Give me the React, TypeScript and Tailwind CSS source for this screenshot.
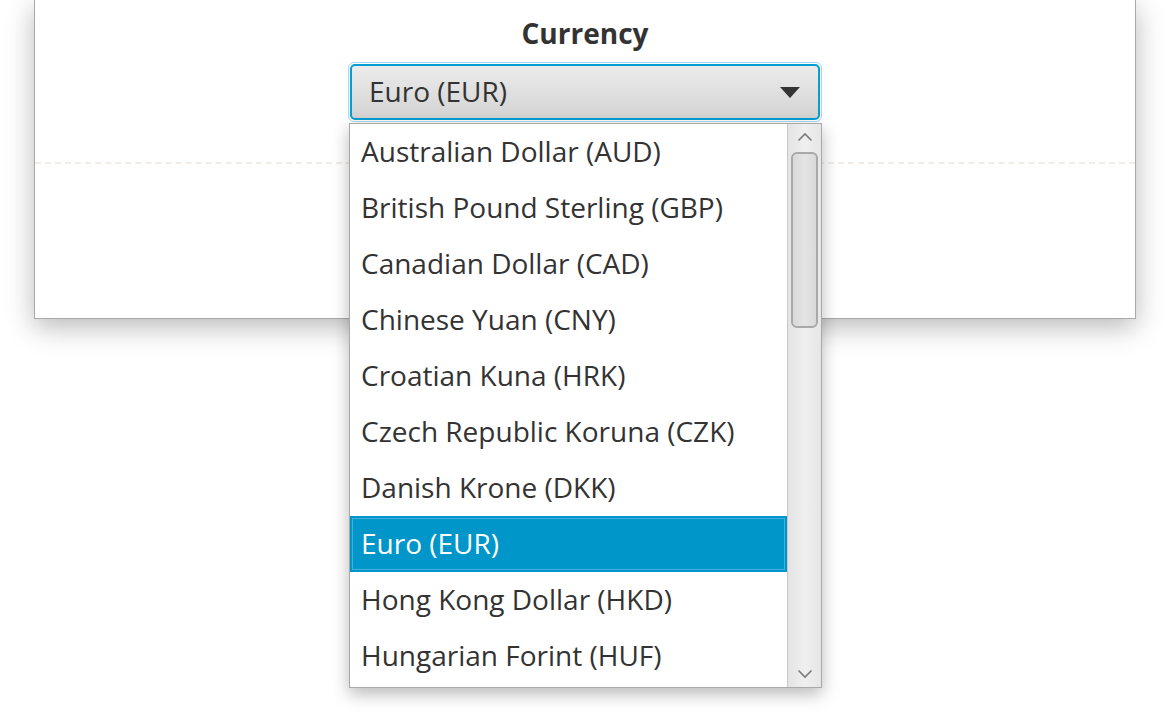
import React from 'react';

const currencies = [
    'Australian Dollar (AUD)',
    'British Pound Sterling (GBP)',
    'Canadian Dollar (CAD)',
    'Chinese Yuan (CNY)',
    'Croatian Kuna (HRK)',
    'Czech Republic Koruna (CZK)',
    'Danish Krone (DKK)',
    'Euro (EUR)',
    'Hong Kong Dollar (HKD)',
    'Hungarian Forint (HUF)',
];

const selected = 'Euro (EUR)';

const ScrollBar = () => (
    <div className="w-[34px] shrink-0 flex flex-col border-l border-[#c9c9c9] bg-gradient-to-r from-[#e4e4e4] via-[#efefef] to-[#e6e6e6]">
        <div className="h-[26px] flex items-center justify-center">
            <svg width="16" height="10" viewBox="0 0 16 10">
                <path d="M1.5 8.5 L8 2 L14.5 8.5" fill="none" stroke="#7a7a7a" strokeWidth="1.6" />
            </svg>
        </div>
        <div className="px-[3px] pt-[2px]">
            <div className="h-[176px] rounded-[6px] border-2 border-[#a9a9a9] bg-gradient-to-r from-[#d9d9d9] via-[#e4e4e4] to-[#dadada]" />
        </div>
        <div className="flex-1" />
        <div className="h-[26px] flex items-center justify-center">
            <svg width="16" height="10" viewBox="0 0 16 10">
                <path d="M1.5 1.5 L8 8 L14.5 1.5" fill="none" stroke="#7a7a7a" strokeWidth="1.6" />
            </svg>
        </div>
    </div>
);

export default function App() {
    return (
        <div
            className="w-[1170px] h-[728px] bg-white overflow-hidden relative"
            style={{ fontFamily: '"Open Sans", "Noto Sans", sans-serif' }}
        >
            <div className="ml-[34px] w-[1102px] h-[319px] bg-white border-x border-b border-[#a8a8a8] shadow-[0_8px_26px_rgba(0,0,0,0.28)] relative">
                <div className="flex flex-col items-center pt-[14px]">
                    <h2 className="text-[28px] font-bold text-[#333] leading-[38px]">Currency</h2>
                    <div className="relative mt-[10px] w-[474px] h-[60px] rounded-[6px] border border-[#a9d8ec] p-px">
                        <div className="h-full w-full rounded-[5px] border-2 border-[#039ed3] bg-gradient-to-b from-[#ececec] to-[#d3d3d3] flex items-center justify-between pl-[17px] pr-[18px]">
                            <span className="text-[28px] text-[#333] leading-[38px] pb-[2px]">{selected}</span>
                            <svg width="20" height="11" viewBox="0 0 20 11">
                                <path d="M0 0 H20 L10 11 Z" fill="#333" />
                            </svg>
                        </div>
                    </div>
                </div>
                <div className="mt-[40px] border-t-2 border-dashed border-[#f1ece7]" />
            </div>

            <div className="absolute left-[349px] top-[123px] w-[473px] h-[565px] bg-white border border-[#a9a9a9] shadow-[0_6px_16px_rgba(0,0,0,0.28)] flex">
                <ul className="flex-1 flex flex-col">
                    {currencies.map((c) =>
                        c === selected ? (
                            <li
                                key={c}
                                className="h-[56px] bg-[#0096c9] border-2 border-[#0096c9] flex items-center"
                            >
                                <div className="h-full w-full border border-[#3fb2dc] flex items-center pl-[8px] pb-[2px] text-[28px] text-white leading-[38px]">
                                    {c}
                                </div>
                            </li>
                        ) : (
                            <li key={c} className="h-[56px] flex items-center pl-[11px] pb-[2px] text-[28px] text-[#333] leading-[38px]">
                                {c}
                            </li>
                        )
                    )}
                </ul>
                <ScrollBar />
            </div>
        </div>
    );
}
